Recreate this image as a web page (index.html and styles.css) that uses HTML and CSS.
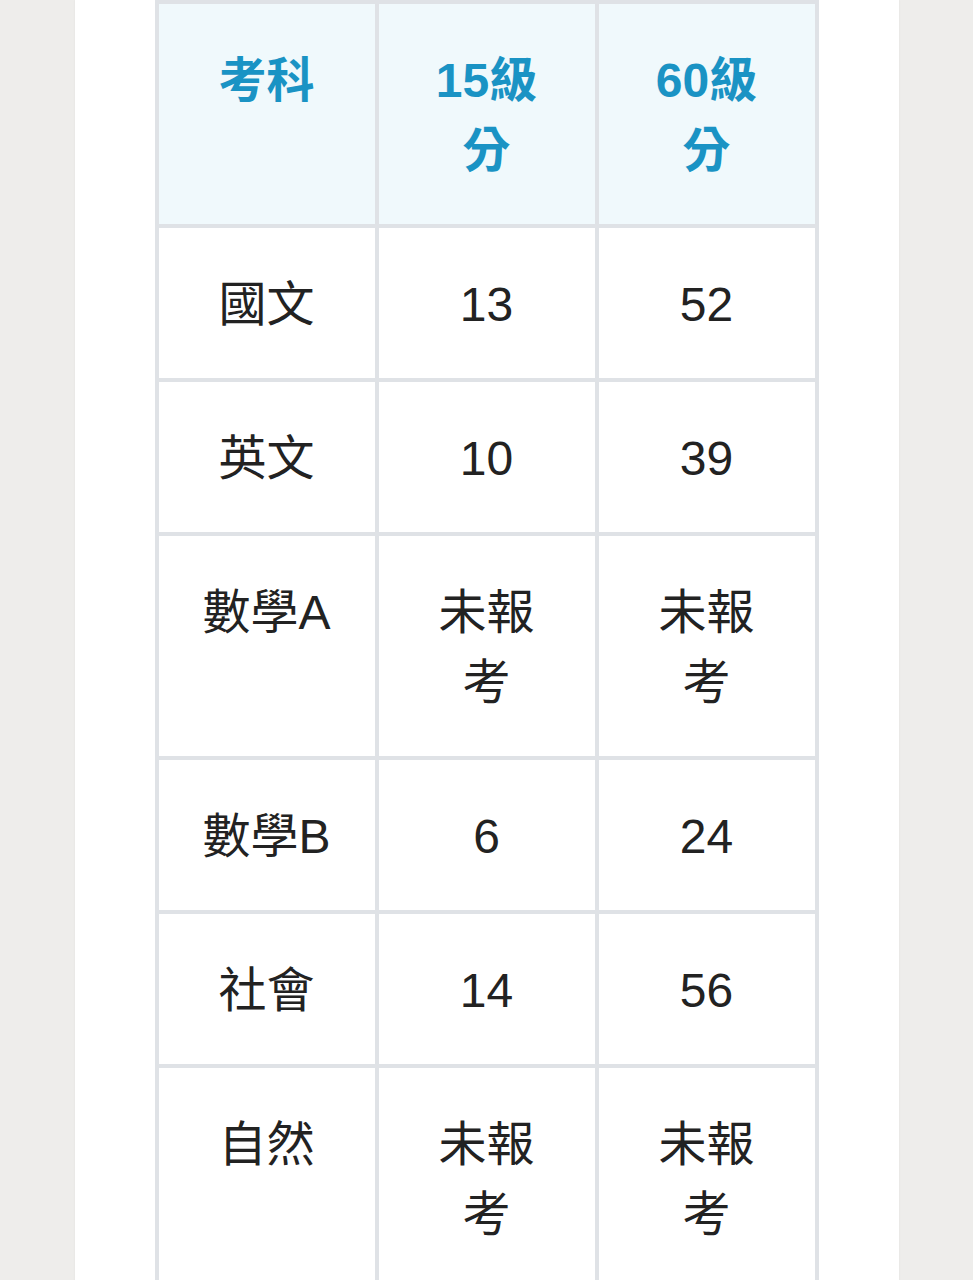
FILE: index.html
```html
<!DOCTYPE html>
<html lang="zh-Hant">
<head>
<meta charset="utf-8">
<title>級分表</title>
<link rel="stylesheet" href="styles.css">
</head>
<body>
<div class="card">
  <table class="scores">
    <thead>
      <tr><th>考科</th><th>15級分</th><th>60級分</th></tr>
    </thead>
    <tbody>
      <tr><td>國文</td><td>13</td><td>52</td></tr>
      <tr><td>英文</td><td>10</td><td>39</td></tr>
      <tr><td>數學A</td><td>未報考</td><td>未報考</td></tr>
      <tr><td>數學B</td><td>6</td><td>24</td></tr>
      <tr><td>社會</td><td>14</td><td>56</td></tr>
      <tr><td>自然</td><td>未報考</td><td>未報考</td></tr>
    </tbody>
  </table>
</div>
</body>
</html>
```
FILE: styles.css
```css
html {
  background: #eeedeb;
}
body {
  margin: 0;
  font-family: "Liberation Sans", "Noto Sans CJK TC", sans-serif;
}
.card {
  width: 824px;
  margin: 0 auto;
  min-height: 1400px;
  background: #ffffff;
  box-shadow: 0 0 2px rgba(0, 0, 0, 0.06);
}
.scores {
  margin: 0 auto;
  border-collapse: separate;
  border-spacing: 0;
  border-top: 4px solid #dfe2e6;
  border-left: 4px solid #dfe2e6;
  table-layout: fixed;
  width: 664px;
}
.scores th,
.scores td {
  width: 136px;
  padding: 42px 40px 38px;
  border-right: 4px solid #dfe2e6;
  border-bottom: 4px solid #dfe2e6;
  font-size: 48px;
  line-height: 70px;
  text-align: center;
  vertical-align: top;
}
.scores th {
  background: #f0f9fc;
  color: #1a93c4;
  font-weight: 700;
}
.scores td {
  background: #ffffff;
  color: #222222;
  font-weight: 400;
}
```
